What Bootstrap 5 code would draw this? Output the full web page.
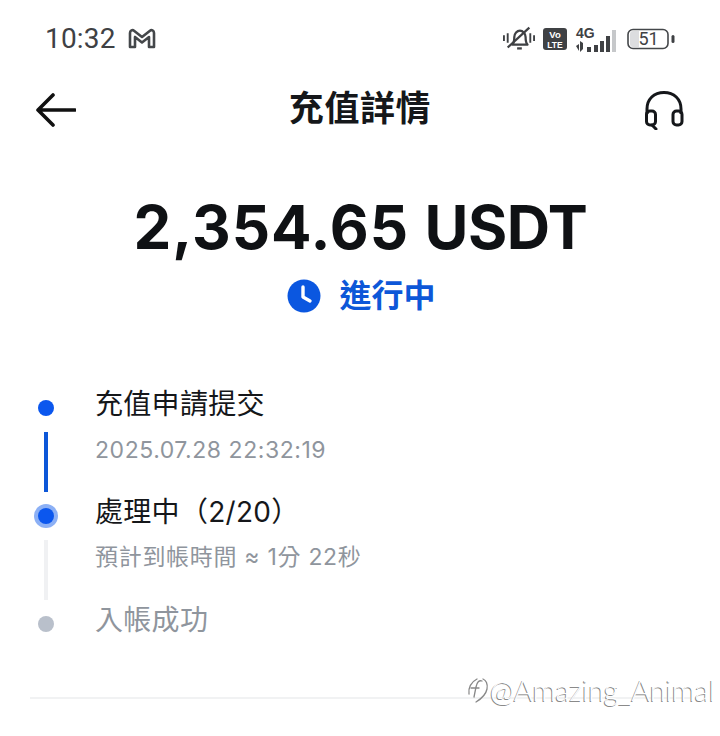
<!doctype html>
<html lang="zh-Hant">
<head>
<meta charset="utf-8">
<title>充值詳情</title>
<link href="https://cdn.jsdelivr.net/npm/bootstrap@5.3.0/dist/css/bootstrap.min.css" rel="stylesheet">
<style>
html,body{margin:0;background:#fff}
body{font-family:"Inter","Noto Sans CJK TC",sans-serif;color:#111}
.shot{width:720px;height:736px;overflow:hidden;position:relative;background:#fff}
.sbar{height:78px;padding:0 45px}
.clock{font-family:"Roboto",sans-serif;font-size:28px;line-height:1;color:#3f4144;letter-spacing:.2px}
.topbar{height:64px;padding:0 36px}
.ttl{font-size:35px;font-weight:700;line-height:1;letter-spacing:.6px;color:#15171a;margin:0 0 4px}
.amt{font-size:60px;font-weight:700;line-height:1;margin-top:55px;color:#0f1114;letter-spacing:1px;font-family:"Inter",sans-serif;padding-left:1px}
.amt span{letter-spacing:-.4px}
.stat{margin-top:21px;color:#0d57d8;font-size:32px;font-weight:700;line-height:36px;padding-left:3px}
.stat svg{margin-right:18px}
.steps{padding:0 0 0 34px;margin-top:74px}
.step{display:flex;height:108px}
.rail{width:24px;padding-top:8px;display:flex;flex-direction:column;align-items:center;flex:none}
.dotbox{width:24px;height:24px;flex:none;display:flex;align-items:center;justify-content:center}
.dot{width:16px;height:16px;border-radius:50%;background:#0b57ee}
.dot.now{box-shadow:0 0 0 4px #8cb0f5}
.dot.off{background:#b9c0cb}
.ln{width:4px;height:60px;margin-top:12px;background:#0d57d8;flex:none}
.ln.off{background:#f0f1f3}
.txt{margin-left:37px}
.h1t{font-size:28px;line-height:32px;color:#15171a;font-weight:400;letter-spacing:.3px}
.h1t.off{color:#8f959d}
.sub{font-size:23px;line-height:32px;margin-top:14px;color:#8f959d;letter-spacing:.55px}
.sub.cjk{letter-spacing:.7px;margin-top:13px}
.rule{height:2px;background:#f1f2f3;margin:-15px 30px 0}
.wm{position:absolute;left:467px;top:672px;font-family:"Lato",sans-serif;font-weight:300;font-size:29px;line-height:36px;color:#fff;text-shadow:-1px 1px 0 #8a8a8a;white-space:nowrap;display:flex;align-items:center;gap:1px;letter-spacing:-.25px}
</style>
</head>
<body>
<div class="shot">
  <div class="sbar d-flex align-items-center justify-content-between">
    <div class="d-flex align-items-center gap-2">
      <span class="clock">10:32</span>
      <svg class="ms-1" width="28" height="22" viewBox="0 0 28 22" fill="none" stroke="#44474a" stroke-width="2.600" stroke-linejoin="round"><path d="M2 19V5c0-2.500 2.500-3.500 4-2.300L14 9l8-6.300c1.500-1.200 4-.2 4 2.300v14h-5V9l-7 5.500L7 9v10z"/></svg>
    </div>
    <div class="d-flex align-items-center gap-2">
      <svg width="32" height="28" viewBox="0 0 34 28" fill="none" stroke="#3f4144" stroke-width="2.400"><path d="M10 20c2-2 2-4 2-8 0-4 3-7 6-7s6 3 6 7c0 4 0 6 2 8z" stroke-linejoin="round"/><path d="M15 24h5"/><path d="M5 23L28 2"/><path d="M1 10v6M5 8v10M29 8v10M33 10v6" stroke-width="2"/></svg>
      <svg width="24" height="22" viewBox="0 0 24 22"><rect width="24" height="22" rx="3" fill="#3f4144"/><text x="12" y="10" text-anchor="middle" font-family="Liberation Sans" font-size="9.500" font-weight="700" fill="#fff">Vo</text><text x="12" y="19.500" text-anchor="middle" font-family="Liberation Sans" font-size="8.500" font-weight="700" fill="#fff">LTE</text></svg>
      <svg width="44" height="28" viewBox="0 0 44 28"><text x="1" y="13" font-family="Liberation Sans" font-size="14" font-weight="700" fill="#3f4144">4G</text><g fill="#3f4144"><path d="M1 21l3-2v7zM5 16v11l3-3v-6z"/><path d="M12 22h4v5h-4z"/><rect x="19" y="20" width="4" height="7"/><rect x="25" y="16" width="4" height="11"/><rect x="31" y="11" width="4" height="16"/></g><rect x="37" y="5" width="4" height="22" fill="#c6c8ca"/></svg>
      <svg width="48" height="22" viewBox="0 0 48 22"><rect x="1" y="1.500" width="40" height="19" rx="5" fill="#fff" stroke="#44474a" stroke-width="1.600"/><path d="M3 6a3 3 0 0 1 3-3h6v16H6a3 3 0 0 1-3-3z" fill="#dcdddf"/><text x="21.500" y="17" text-anchor="middle" font-family="Roboto" font-size="18" fill="#3f4144">51</text><rect x="44.500" y="7" width="3" height="8" rx="1.500" fill="#3f4144"/></svg>
    </div>
  </div>
  <div class="topbar d-flex align-items-center justify-content-between">
    <svg width="40" height="36" viewBox="0 0 40 36" fill="none" stroke="#111" stroke-width="3.600" stroke-linecap="round" stroke-linejoin="round"><path d="M39 18H3M17 3L2 18l15 15"/></svg>
    <h1 class="ttl">充值詳情</h1>
    <svg width="40" height="40" viewBox="0 0 40 40" fill="none" stroke="#15171a" stroke-width="3"><path d="M3 24V19C3 9 10 2.500 20 2.500S37 9 37 19v5"/><rect x="2.500" y="21" width="9" height="14" rx="3.500"/><rect x="29" y="21" width="9" height="14" rx="3.500"/><path d="M8 35l4 4" stroke-linecap="round"/></svg>
  </div>
  <div class="text-center amt">2,354.65 <span>USDT</span></div>
  <div class="stat d-flex justify-content-center align-items-center">
    <svg width="34" height="34" viewBox="0 0 34 34"><circle cx="17" cy="17" r="16.500" fill="#0b57e0"/><path d="M16 8v10l7 4" fill="none" stroke="#fff" stroke-width="3.400" stroke-linecap="round" stroke-linejoin="round"/></svg>
    <span>進行中</span>
  </div>
  <div class="steps">
    <div class="step">
      <div class="rail"><div class="dotbox"><div class="dot"></div></div><div class="ln"></div></div>
      <div class="txt"><div class="h1t">充值申請提交</div><div class="sub">2025.07.28 22:32:19</div></div>
    </div>
    <div class="step">
      <div class="rail"><div class="dotbox"><div class="dot now"></div></div><div class="ln off"></div></div>
      <div class="txt"><div class="h1t">處理中（2/20）</div><div class="sub cjk">預計到帳時間 ≈ 1分 22秒</div></div>
    </div>
    <div class="step">
      <div class="rail"><div class="dotbox"><div class="dot off"></div></div></div>
      <div class="txt"><div class="h1t off">入帳成功</div></div>
    </div>
  </div>
  <div class="rule"></div>
  <div class="wm"><svg width="22" height="28" viewBox="0 0 22 28" fill="none" stroke="#888" stroke-width="1.300" stroke-linecap="round"><path d="M16 3c3 1 5 5 4 10-1 5-6 10-11 13"/><path d="M2 18C1 12 4 6 10 3"/><path d="M15 5c-3-1-5 1-6 6L7 21M4 12h8"/></svg><span>@Amazing_Animal</span></div>
</div>
<script src="https://cdn.jsdelivr.net/npm/bootstrap@5.3.0/dist/js/bootstrap.bundle.min.js"></script>
</body>
</html>
